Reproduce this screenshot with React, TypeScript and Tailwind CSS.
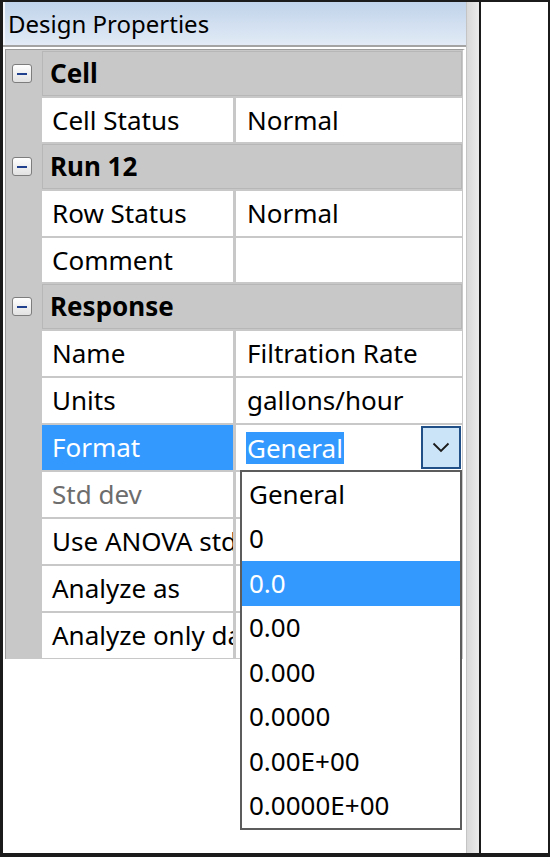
import React from "react";

const font = { fontFamily: '"Noto Sans", "Open Sans", sans-serif' };

function MinusBox() {
  return (
    <div className="w-[20px] h-[19px] rounded-[3px] border border-[#7d7d7d] bg-gradient-to-b from-white to-[#e2e2e2] flex items-center justify-center">
      <div className="w-[10px] h-[2px] bg-[#21418f]" />
    </div>
  );
}

function Category({ label }: { label: string }) {
  return (
    <div className="flex h-[47px] py-[1px]">
      <div className="w-[36px] flex items-center pl-[6px]">
        <MinusBox />
      </div>
      <div className="w-[420px] border border-[#b7b7b7] flex items-center pl-[7px] font-bold text-[26px] text-black">
        {label}
      </div>
    </div>
  );
}

function Row({
  label,
  value,
  gray,
  h,
}: {
  label: string;
  value?: string;
  gray?: boolean;
  h?: string;
}) {
  return (
    <div className={`flex ${h ?? "h-[47px]"} py-[1px]`}>
      <div className="w-[36px]" />
      <div
        className={`w-[191px] bg-white flex items-center pl-[10px] overflow-hidden whitespace-nowrap text-[26px] ${
          gray ? "text-[#6d6d6d]" : "text-black"
        }`}
      >
        {label}
      </div>
      <div className="w-[3px]" />
      <div className="w-[226px] bg-white flex items-center pl-[11px] overflow-hidden whitespace-nowrap text-[26px] text-black">
        {value ?? ""}
      </div>
    </div>
  );
}

function FormatRow() {
  return (
    <div className="flex h-[47px] py-[1px]">
      <div className="w-[36px]" />
      <div className="w-[191px] bg-[#3399ff] flex items-center pl-[10px] text-[26px] text-white">
        Format
      </div>
      <div className="w-[3px]" />
      <div className="w-[226px] bg-white flex items-center justify-between pl-[10px] pr-[1px]">
        <span className="bg-[#3399ff] text-white text-[26px] leading-[32px] px-[1px]">
          General
        </span>
        <div className="w-[40px] h-[43px] border-2 border-[#1f4f86] bg-[#cce4f7] flex items-center justify-center">
          <svg width="18" height="11" viewBox="0 0 18 11">
            <polyline
              points="1.5,1.5 9,9 16.5,1.5"
              fill="none"
              stroke="#1a1a1a"
              strokeWidth="1.8"
            />
          </svg>
        </div>
      </div>
    </div>
  );
}

const options = [
  "General",
  "0",
  "0.0",
  "0.00",
  "0.000",
  "0.0000",
  "0.00E+00",
  "0.0000E+00",
];

export default function App() {
  return (
    <div
      className="w-[550px] h-[857px] bg-white border-t-2 border-l-[3px] border-b-[4px] border-r-2 border-[#1b1b1b] flex"
      style={font}
    >
      <div className="w-[476px] h-full flex relative">
        <div className="w-[463px] flex flex-col">
          <div className="h-[43px] bg-gradient-to-b from-[#c0d3ea] to-[#e2ebf6] border-l-2 border-[#f4f7fb] pl-[3px] flex items-center text-[24px] text-black">
            Design Properties
          </div>
          <div className="h-[2px] bg-[#a4a4a4]" />
          <div className="h-[2px] bg-white" />
          <div className="ml-[2px] w-[460px] bg-[#c8c8c8] border-t border-l border-[#9c9c9c] border-r-2 border-r-white">
            <Category label="Cell" />
            <Row label="Cell Status" value="Normal" h="h-[46px]" />
            <Category label="Run 12" />
            <Row label="Row Status" value="Normal" />
            <Row label="Comment" h="h-[46px]" />
            <Category label="Response" />
            <Row label="Name" value="Filtration Rate" />
            <Row label="Units" value="gallons/hour" />
            <FormatRow />
            <Row label="Std dev" gray />
            <Row label="Use ANOVA std dev" />
            <Row label="Analyze as" />
            <Row label="Analyze only data" />
          </div>
        </div>
        <div className="w-[13px] h-full bg-gradient-to-r from-[#d9d9d9] to-[#ececec] border-l border-[#c4c4c4]" />

        <div className="absolute left-[237px] top-[468px] w-[222px] border-2 border-[#5c5c5c] bg-white">
          {options.map((o) => (
            <div
              key={o}
              className={`h-[44.5px] flex items-center pl-[7px] text-[26px] ${
                o === "0.0" ? "bg-[#3399ff] text-white" : "text-black"
              }`}
            >
              {o}
            </div>
          ))}
        </div>
      </div>
      <div className="w-[2px] h-full bg-[#1b1b1b]" />
      <div className="flex-1 bg-white" />
    </div>
  );
}
